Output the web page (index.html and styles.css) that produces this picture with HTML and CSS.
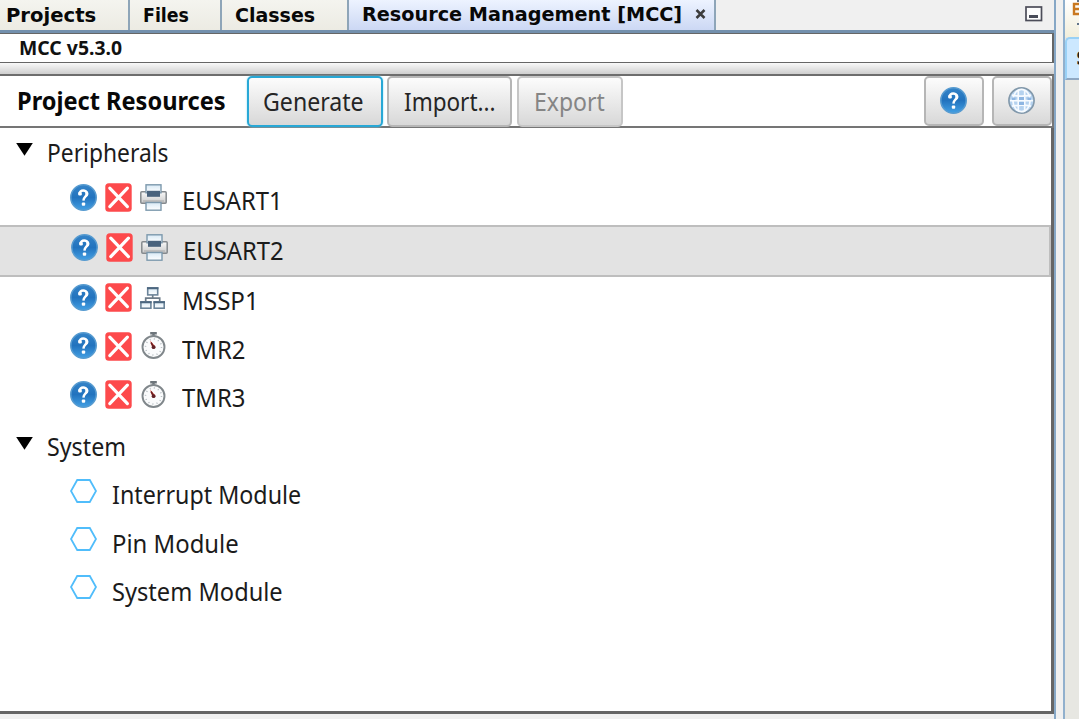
FILE: index.html
```
<!DOCTYPE html>
<html lang="en">
<head>
<meta charset="utf-8">
<title>Resource Management [MCC]</title>
<link rel="stylesheet" href="styles.css">
</head>
<body>
<svg class="defs" width="0" height="0" aria-hidden="true">
  <defs>
    <linearGradient id="blue" x2="0" y2="1"><stop stop-color="#3584c8"/><stop offset=".5" stop-color="#2273be"/><stop offset="1" stop-color="#43a0e4"/></linearGradient>
    <linearGradient id="paper" x2="0" y2="1"><stop stop-color="#d8e9f5"/><stop offset="1" stop-color="#fff"/></linearGradient>
    <linearGradient id="case" x2="0" y2="1"><stop stop-color="#fafafa"/><stop offset="1" stop-color="#c9c9c9"/></linearGradient>
    <symbol id="help" viewBox="0 0 27 27">
      <circle cx="13.5" cy="13.5" r="12.7" fill="url(#blue)" stroke="#579bd0" stroke-width="1.6"/>
      <path d="M9.6 9.8C9.2 5.4 16.9 5.4 16.9 9.4C16.9 12.6 13.6 12.7 13.4 16.6" fill="none" stroke="#fff" stroke-width="2.4"/>
      <path d="M15 6.3C19.6 7.4 19.3 11.8 15.8 13.2Z" fill="#fff"/>
      <rect x="8.2" y="7.9" width="3.6" height="3.6" rx="1.2" fill="#fff"/>
      <rect x="11.8" y="18.4" width="3.4" height="3.4" rx="1" fill="#fff"/>
    </symbol>
    <symbol id="remove" viewBox="0 0 27 29">
      <rect x=".3" y=".3" width="26.4" height="28.4" rx="3.5" fill="#fd4a4c"/>
      <path d="M4.8 5.2L22.4 23.6M22.4 5.2L4.8 23.6" stroke="#fff" stroke-width="3.2" stroke-linecap="round"/>
    </symbol>
    <symbol id="printer" viewBox="0 0 27 27">
      <rect x=".8" y="7.7" width="25.4" height="11.6" rx="1" fill="url(#case)" stroke="#858a8e" stroke-width="1.5"/>
      <rect x="6" y=".8" width="15" height="8" fill="url(#paper)" stroke="#7d99ad" stroke-width="1.4"/>
      <rect x="7" y="6.8" width="13" height="6" fill="#49627c"/>
      <path d="M3 17h21" stroke="#a8a8a8"/>
      <rect x="6" y="18.5" width="15" height="7.7" fill="url(#paper)" stroke="#7d99ad" stroke-width="1.4"/>
    </symbol>
    <symbol id="network" viewBox="0 0 27 27">
      <path d="M12.7 10.5v4M5.7 17v-2.8h14V17" fill="none" stroke="#6c7b88" stroke-width="1.7"/>
      <g fill="url(#paper)" stroke="#6b8499" stroke-width="1.6">
        <rect x="7.7" y="3.9" width="10" height="7"/><rect x=".9" y="17.9" width="10" height="6.3"/><rect x="14.2" y="17.9" width="10" height="6.3"/>
      </g>
      <path d="M7 4.3h11.4M.2 18.3h11.4M13.5 18.3h11.4" stroke="#4c6780" stroke-width="1.9"/>
    </symbol>
    <symbol id="timer" viewBox="0 0 27 27">
      <path d="M10.2 1.2h6.6M13.5 1v4" stroke="#6d757b" stroke-width="2.4"/>
      <circle cx="13.5" cy="15" r="11" fill="#fafbfc" stroke="#80878b" stroke-width="1.9"/>
      <circle cx="13.5" cy="15" r="8" fill="none" stroke="#b1b9be" stroke-width="1.5" stroke-dasharray="1 3.2"/>
      <path d="M10 8.5L15.5 14.5L12.5 16.5Z" fill="#e75a4c"/><path d="M11 10.5L14.2 16" stroke="#6b1e20" stroke-width="1.5"/><circle cx="13.6" cy="15.2" r="1.9" fill="#612126"/>
    </symbol>
    <symbol id="hexagon" viewBox="0 0 27 24">
      <path d="M7.2 1H19.8L26 12L19.8 23H7.2L1 12Z" fill="#fff" stroke="#50bdfb" stroke-width="1.8"/>
    </symbol>
    <symbol id="globe" viewBox="0 0 27 27">
      <circle cx="13.5" cy="13.5" r="12.6" fill="#b5d2ef" stroke="#8298aa" stroke-width="1.6"/>
      <g fill="none" stroke="#f7fbff" stroke-width="1.7"><ellipse cx="13.5" cy="13.5" rx="8.6" ry="11.2"/><path d="M10.3 3v21M16.7 3v21M2 13.7h23M4 8.2q9.5 2 19 0M4 19.2q9.5-2 19 0"/></g>
      <path d="M11 10h5v3h-5zM11 15h5v3h-5zM4 10.5h3.5v2.5H4zM19.5 10.5H23V13h-3.5z" fill="#8eb6e2"/>
    </symbol>
  </defs>
</svg>
<div class="ide">
  <main class="panel">
    <nav class="tabs">
      <div class="tab tab-projects"><span>Projects</span></div>
      <div class="tab tab-files"><span>Files</span></div>
      <div class="tab tab-classes"><span>Classes</span></div>
      <div class="tab tab-active"><span>Resource Management [MCC]</span>
        <svg class="close" viewBox="0 0 11 10"><path d="M1.5 1L9.5 9M9.5 1L1.5 9" stroke="#3c3c3c" stroke-width="2.5"/></svg></div>
      <svg class="minimize" viewBox="0 0 18 16"><rect x="1" y="1" width="15.5" height="13.5" fill="#fdfdfd" stroke="#4c4d59" stroke-width="1.7"/><path d="M4 10.5h9" stroke="#484b58" stroke-width="3"/></svg>
    </nav>
    <div class="version"><span>MCC v5.3.0</span></div>
    <div class="splitter"></div>
    <header class="toolbar">
      <h1><span>Project Resources</span></h1>
      <button class="btn generate"><span>Generate</span></button>
      <button class="btn import"><span>Import...</span></button>
      <button class="btn export" disabled><span>Export</span></button>
      <div class="tools">
        <button class="btn tool" aria-label="Help"><svg><use href="#help"/></svg></button>
        <button class="btn tool last" aria-label="Web"><svg><use href="#globe"/></svg></button>
      </div>
    </header>
    <section class="tree">
      <div class="row group"><i class="arrow"></i><span class="peripherals">Peripherals</span></div>
      <div class="row item"><svg><use href="#help"/></svg><svg class="x"><use href="#remove"/></svg><svg><use href="#printer"/></svg><span class="eusart">EUSART1</span></div>
      <div class="row item selected"><svg><use href="#help"/></svg><svg class="x"><use href="#remove"/></svg><svg><use href="#printer"/></svg><span class="eusart">EUSART2</span></div>
      <div class="row item"><svg><use href="#help"/></svg><svg class="x"><use href="#remove"/></svg><svg><use href="#network"/></svg><span class="mssp">MSSP1</span></div>
      <div class="row item"><svg><use href="#help"/></svg><svg class="x"><use href="#remove"/></svg><svg><use href="#timer"/></svg><span class="tmr">TMR2</span></div>
      <div class="row item"><svg><use href="#help"/></svg><svg class="x"><use href="#remove"/></svg><svg><use href="#timer"/></svg><span class="tmr">TMR3</span></div>
      <div class="row group"><i class="arrow"></i><span class="system">System</span></div>
      <div class="row module"><svg><use href="#hexagon"/></svg><span class="interrupt">Interrupt Module</span></div>
      <div class="row module"><svg><use href="#hexagon"/></svg><span class="pin">Pin Module</span></div>
      <div class="row module"><svg><use href="#hexagon"/></svg><span class="sysmod">System Module</span></div>
    </section>
    <div class="bottom"></div>
  </main>
  <div class="gutter"></div>
  <aside class="side">
    <div class="side-top"><svg viewBox="0 0 15 30"><path d="M12 1h3M12 24h3" stroke="#64758a" stroke-width="2"/><path d="M15 4H9v10h6M9 9h6" fill="none" stroke="#c97820" stroke-width="2.4"/></svg></div>
    <div class="side-tab"><span>S</span></div>
  </aside>
</div>
</body>
</html>
```
FILE: styles.css
```
* { box-sizing: border-box; }
body { margin: 0; overflow: hidden; background: #f0f0f0; color: #1b1b1b; font-family: "Noto Sans", "Open Sans", sans-serif; }
.defs { position: absolute; }
svg { display: block; flex: none; }
span { display: inline-block; white-space: nowrap; transform-origin: left center; }
.ide { display: flex; width: 1079px; height: 719px; }
.panel { display: flex; flex-direction: column; width: 1056px; border-right: 2px solid #86a7c6; }

.tabs { display: flex; flex: none; height: 33px; border-bottom: 3px solid #7390ad; background: #f0f0f0; font: bold 20px/31px "DejaVu Sans", sans-serif; color: #080808; }
.tab { flex: none; height: 30px; border-right: 2px solid #8ea5b8; background: linear-gradient(#f4f4ef, #ecebe3); }
.tab-projects { width: 130px; padding-left: 6px; }
.tab-projects span { transform: scaleX(.98); }
.tab-files { width: 92px; padding-left: 13px; }
.tab-files span { transform: scaleX(.87); }
.tab-classes { width: 127px; padding-left: 13px; }
.tab-classes span { transform: scaleX(.95); }
.tab-active { display: flex; align-items: center; justify-content: space-between; width: 367px; padding: 0 8px 2px 13px; background: linear-gradient(#edf3ff, #ccd8f4); }
.tab-active span { width: 320px; transform: scaleX(.962); }
.close { width: 11px; height: 10px; }
.minimize { width: 18px; height: 16px; margin: 6px 11px 0 auto; }

.version { flex: none; height: 30px; border: 1px solid #666; border-width: 1px 2px 1px 0; padding-left: 19px; background: #fff; font-size: 19px; line-height: 28px; font-weight: 700; color: #111; }
.version span { transform: scaleX(1.02); }
.splitter { flex: none; height: 11px; background: linear-gradient(#f9f9f9, #cfcfcf); }
.toolbar { display: flex; flex: none; height: 54px; border-top: 2px solid #6d6d6d; border-bottom: 2px solid #757575; border-right: 2px solid #777; background: #fff; }
h1 { width: 247px; margin: 0; padding-left: 17px; font-size: 25px; line-height: 49px; color: #080808; }
h1 span { transform: scaleX(.943); }
.btn { flex: none; height: 51px; margin: 0 4px 0 0; padding: 0 0 0 14px; border: 2px solid #b6b6b6; border-radius: 5px; background: linear-gradient(#fcfcfc, #d8d8d8); font: 25px/45px "Noto Sans", sans-serif; text-align: left; color: #252525; }
.generate { width: 136px; border-color: #28a8d6; box-shadow: 0 0 2px #7bd9f7; }
.generate span { transform: scaleX(.925); }
.import { width: 125px; padding-left: 15px; margin-right: 5px; }
.import span { transform: scaleX(.9); }
.export { width: 106px; padding-left: 15px; color: #858585; border-color: #c6c6c6; }
.export span { transform: scaleX(.92); }
.tools { display: flex; margin-left: auto; }
.tool { width: 60px; height: 50px; margin-right: 8px; padding: 0 0 2px 14px; }
.tool svg { width: 27px; height: 27px; }
.last { margin-right: 0; }

.tree { flex: 1; min-height: 0; border-right: 3px solid #656565; background: #fff; font-size: 25px; }
.row { display: flex; align-items: center; height: 48.4px; }
.group { padding-left: 16px; }
.arrow { width: 17px; height: 13px; margin: 0 14px 6px 0; background: #000; clip-path: polygon(0 0, 100% 0, 50% 100%); }
.item, .module { padding-left: 70px; }
.item svg { width: 27px; height: 27px; margin: 0 8px 7px 0; }
.item .x { height: 29px; margin-bottom: 6px; }
.item span { margin: 0 0 1px 7px; }
.peripherals { transform: scaleX(.912); }
.eusart { transform: scaleX(.953); }
.mssp { transform: scaleX(.965); }
.tmr { transform: scaleX(.955); }
.system { transform: scaleX(.93); }
.interrupt { transform: scaleX(.931); margin-bottom: 1px; }
.pin { transform: scaleX(.955); }
.sysmod { transform: scaleX(.945); }
.selected { height: 52px; padding-left: 71px; border: 2px solid #bebebe; border-left: 0; background: #e3e3e3; }
.module svg { width: 27px; height: 24px; margin: 0 15px 8px 0; }
.bottom { flex: none; height: 8px; border-top: 3px solid #656565; background: #f0f0f0; }

.gutter { width: 7px; background: #f0f0f0; }
.side { width: 16px; border-left: 2px solid #91b0cd; background: #e7e7e2; }
.side-top { height: 37px; background: linear-gradient(#fff, #f2eedb); overflow: hidden; }
.side-top svg { width: 15px; height: 30px; }
.side-tab { height: 43px; overflow: hidden; border: 2px solid #99d1f6; border-right: 0; border-bottom-color: #8fa8c2; border-radius: 5px 0 0; background: #cce8ff; font: bold 19px/38px "DejaVu Sans", sans-serif; padding-left: 9px; }
```
